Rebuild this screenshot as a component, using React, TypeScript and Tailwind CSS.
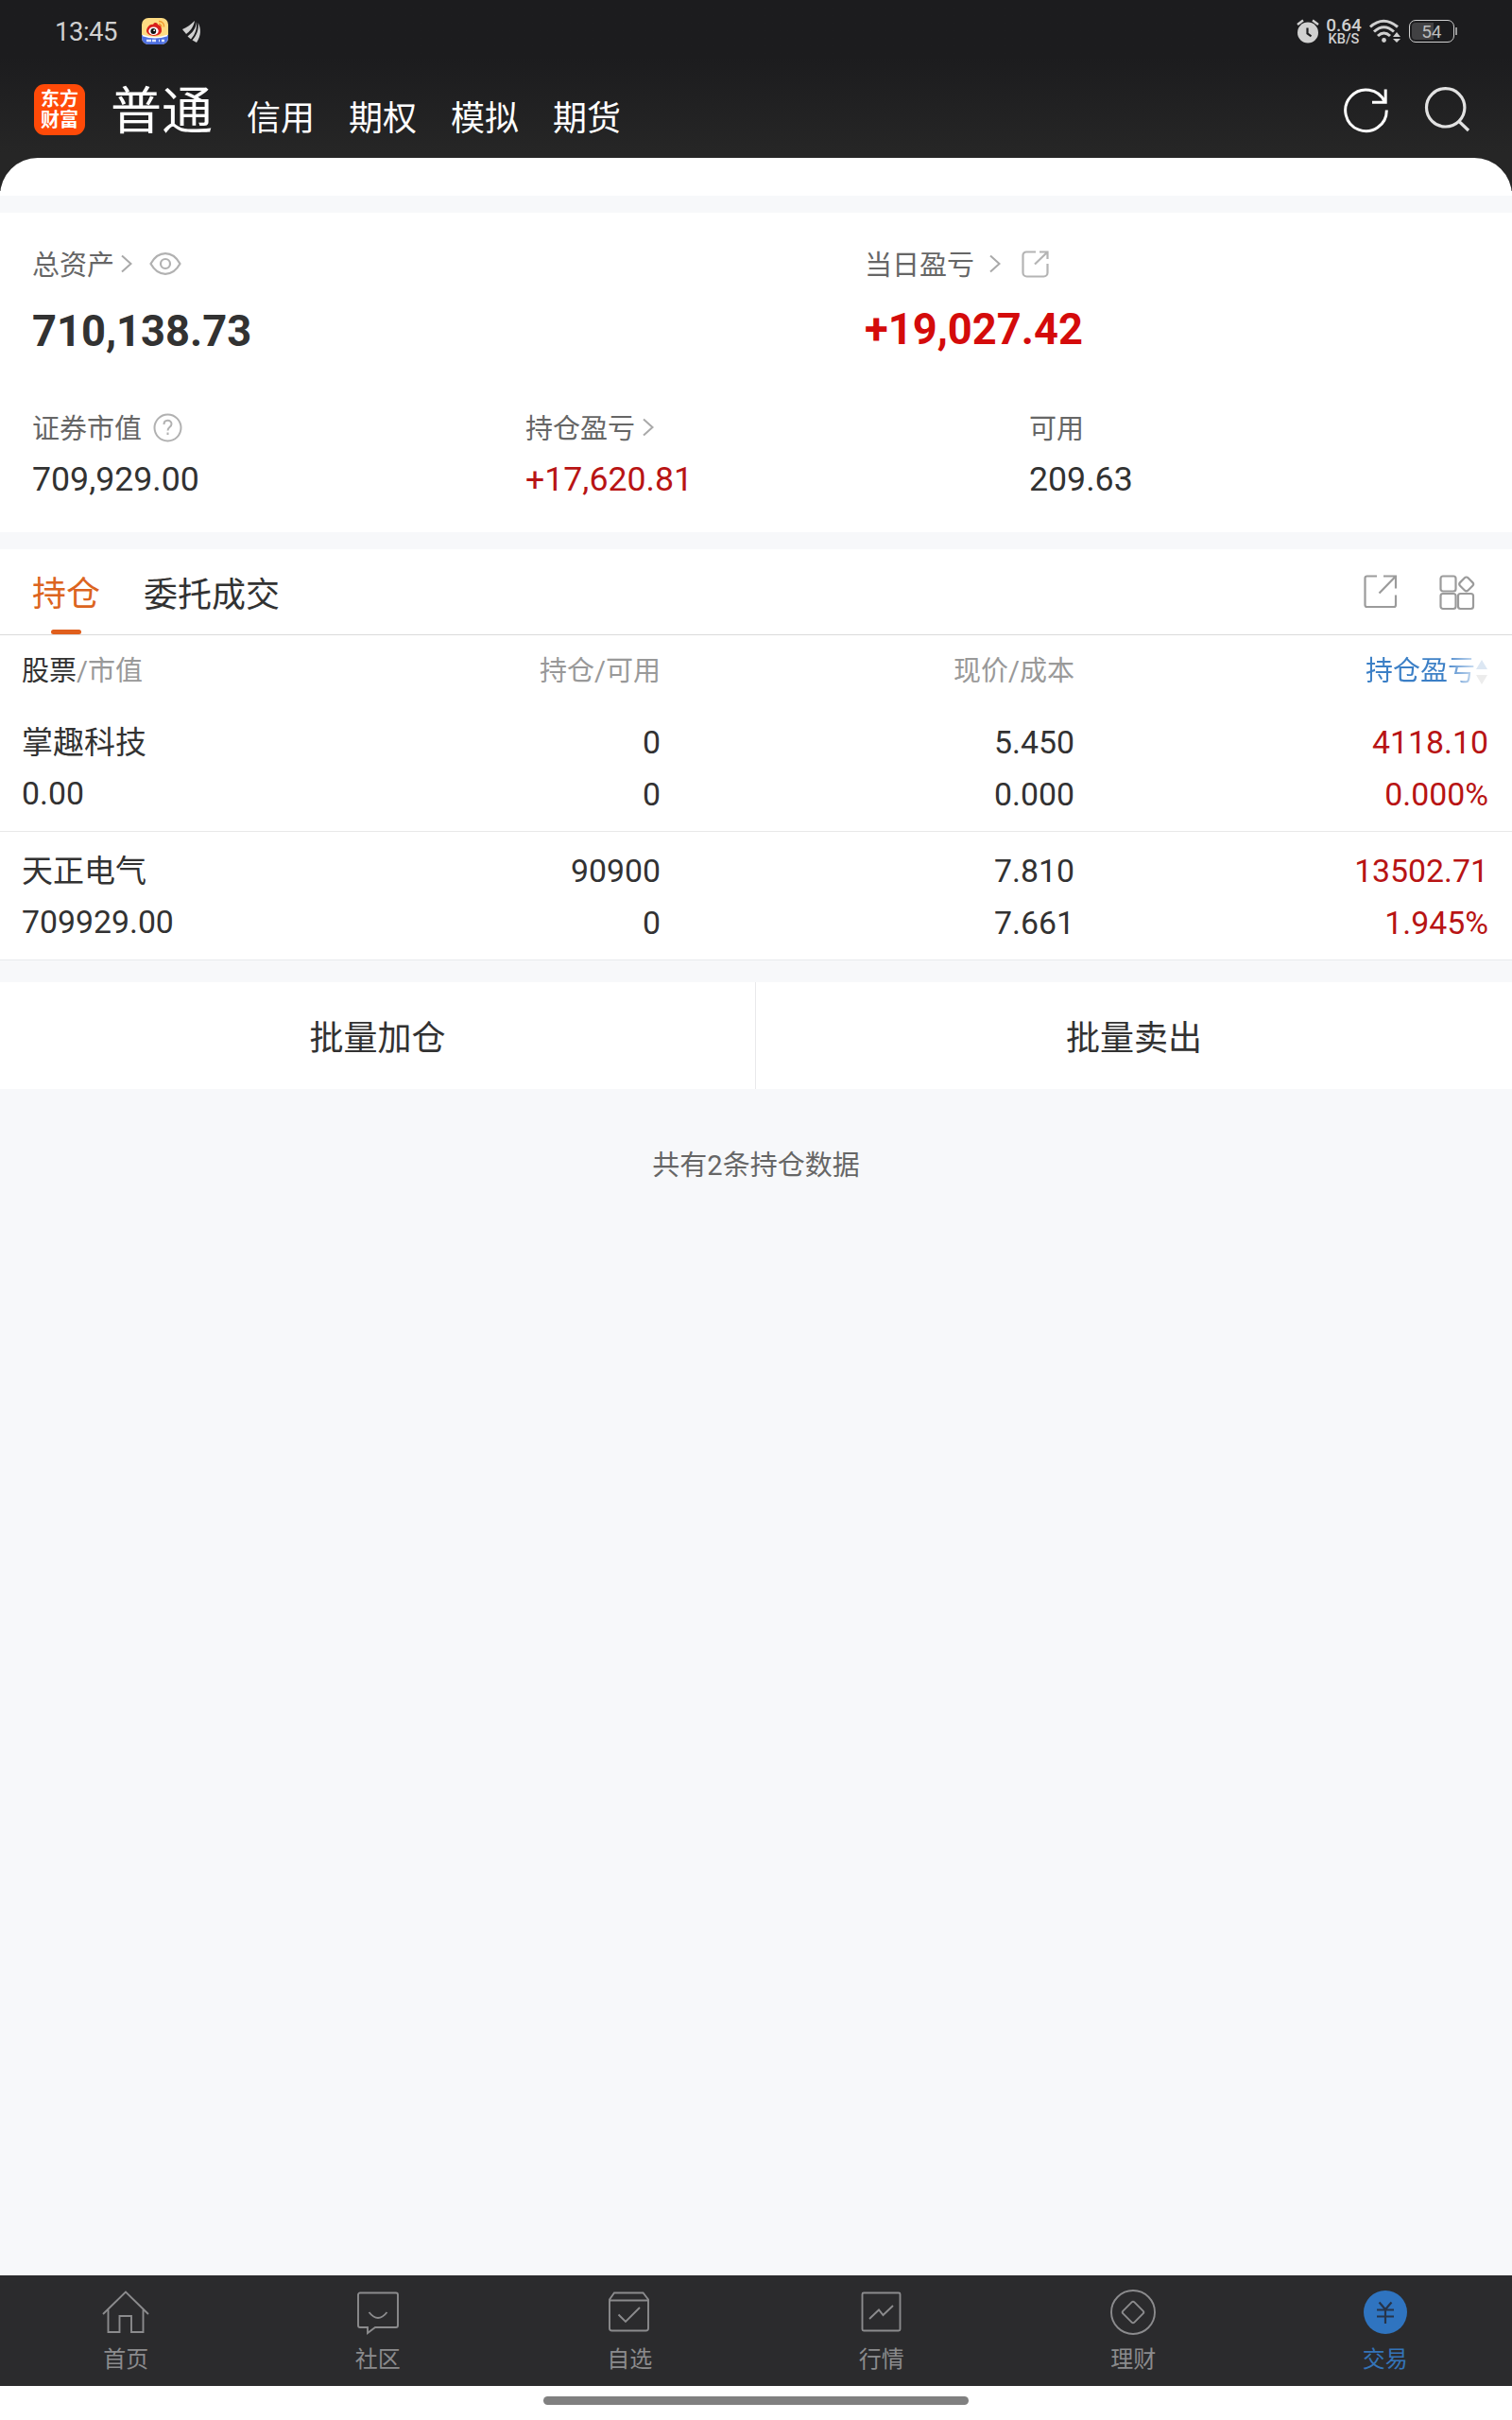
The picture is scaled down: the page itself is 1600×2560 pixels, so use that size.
import React from "react";

const cjk = "font-['Roboto','Noto_Sans_CJK_SC',sans-serif]";

function Chevron({ className = "" }: { className?: string }) {
  return (
    <svg className={className} width="12" height="20" viewBox="0 0 12 20" fill="none" stroke="#a9a9a9" strokeWidth="2">
      <path d="M1 1.500 10.500 10 1 18.500" />
    </svg>
  );
}

function StatusBar() {
  return (
    <div className="flex h-[66px] items-center pl-[58px] pr-[58px] text-[#d0d0d0]">
      <span className="w-[67px] pt-px text-[27.500px] leading-none tracking-[-0.5px]">13:45</span>
      <svg className="ml-[25px]" width="28" height="28" viewBox="0 0 28 28">
        <rect width="28" height="28" rx="7" fill="#fddb83" />
        <path d="M0 18 Q14 23 28 18 V21 a7 7 0 0 1-7 7 H7 a7 7 0 0 1-7-7Z" fill="#4d6fe0" />
        <path d="M1 18.500Q14 23 27 18.500" stroke="#fff" strokeWidth="1.500" fill="none" />
        <path d="M5 14c0-4 4-8 7-7 1-3 5-2 5 0 4 1 4 4 4 7-1 6-14 7-16 0Z" fill="#d8201c" />
        <ellipse cx="12.500" cy="13.800" rx="5.200" ry="4.300" fill="#fff" />
        <circle cx="12.300" cy="14" r="2.900" fill="#111" />
        <circle cx="13.200" cy="13.200" r="0.900" fill="#fff" />
        <path d="M18 3.500c4 0 6 3 5.500 6M18 6.500c2 0 3 1.500 2.800 3" stroke="#f29a2e" strokeWidth="1.400" fill="none" />
        <path d="M5 24h5M11 24h4M18 24h1M21 24h3" stroke="#dfe6ff" strokeWidth="2.400" />
      </svg>
      <svg className="ml-[15px]" width="21" height="23" viewBox="0 0 21 23" fill="#d0d0d0">
        <path d="M0 9C5 7 9 4 13 0 12 7 7 12 4 14 3 12 1 11 0 9Z" />
        <path d="M14.500 1C15 8 10 13 5.500 16.500L9 19.500C14 14 16 7 14.500 1Z" />
        <path d="M16.500 2C18 9 14.500 16 10.500 20.500L15 23C20 16 20 8 16.500 2Z" />
      </svg>
      <div className="ml-auto flex items-center">
        <svg width="24" height="26" viewBox="0 0 24 26" fill="none">
          <circle cx="12" cy="14.500" r="11" fill="#d0d0d0" />
          <path d="M1 6 7 1.500M23 6l-6-4.500" stroke="#d0d0d0" strokeWidth="2.400" />
          <path d="M11.500 9.500v6l4 2.800" stroke="#1d1d1f" strokeWidth="2.200" />
        </svg>
        <div className="ml-[7px] flex w-[38px] flex-col items-center gap-px pt-[2px] font-['Roboto'] font-medium">
          <span className="text-[19px] leading-[15px]">0.64</span>
          <span className="text-[14.500px] leading-[14px]">KB/S</span>
        </div>
        <svg className="ml-2" width="33" height="26" viewBox="0 0 33 26" fill="none" stroke="#d0d0d0" strokeWidth="3">
          <path d="M1 8.500Q15 -4 30 8.500M5 13.500Q15.500 4 26 13.500M9 18Q15.500 12 22 18" />
          <circle cx="15.500" cy="22.500" r="2.400" fill="#d0d0d0" stroke="none" />
          <path d="m29 14 4 5h-8ZM29 25l-4-4h8Z" fill="#d0d0d0" stroke="none" />
        </svg>
        <div className="ml-[9px] flex items-center">
          <div className="flex h-6 w-12 items-center rounded-[7px] border-[1.500px] border-[#d0d0d0] p-[2px]">
            <div className="h-full w-[23px] rounded-l-[4px] bg-[#414143]" />
            <span className="-ml-[23px] w-[43px] text-center font-['Roboto'] text-[19px] leading-none text-[#bdbdbd]">54</span>
          </div>
          <div className="ml-px h-2 w-[2px] bg-[#9a9a9a]" />
        </div>
      </div>
    </div>
  );
}

function Header() {
  return (
    <header className="h-[202px] bg-linear-to-b from-[#1c1c1e] from-30% to-[#262626] to-80% text-white">
      <StatusBar />
      <div className="flex h-[101px] items-start pl-9 pr-[44px]">
        <div className="mt-[23px] flex h-[54px] w-[54px] flex-col items-center justify-center rounded-[11px] bg-[#ff4a08] text-[20px] font-bold leading-[22px]">
          <span>东方</span>
          <span>财富</span>
        </div>
        <span className="ml-[27px] mt-[21px] text-[54px] leading-[64px]">普通</span>
        <nav className="ml-9 mt-[37px] flex gap-9 text-[36px] leading-[46px]">
          <span>信用</span>
          <span>期权</span>
          <span>模拟</span>
          <span>期货</span>
        </nav>
        <svg className="ml-auto mt-[26px]" width="50" height="50" viewBox="0 0 50 50" fill="none" stroke="#fff" strokeWidth="3">
          <path d="M46.300 24.600A21.800 21.800 0 1 1 44.200 15.500M45.200 2.500V16.300H31" />
        </svg>
        <svg className="ml-[35px] mt-[25px]" width="50" height="50" viewBox="0 0 50 50" fill="none" stroke="#e2e2e2" strokeWidth="3.200">
          <circle cx="23.700" cy="22.800" r="20.200" />
          <path d="M37.500 37 48 47" />
        </svg>
      </div>
    </header>
  );
}

const labelRow = "flex items-center text-[29px] text-[#666]";

function Summary() {
  return (
    <section className="h-[338px] bg-white px-[34px] pt-[35px] text-[#323232]">
      <div className="flex h-[172px]">
        <div className="w-[881px]">
          <div className={`h-[38px] ${labelRow}`}>
            <span className="pt-[5px]">总资产</span>
            <Chevron className="ml-[7px]" />
            <svg className="ml-[18px]" width="34" height="24" viewBox="0 0 34 24" fill="none" stroke="#b1b1b1" strokeWidth="2.200">
              <path d="M1.500 12C6 4 11 1.200 17 1.200S28 4 32.500 12C28 20 23 22.800 17 22.800S6 20 1.500 12Z" />
              <circle cx="17" cy="12" r="5" />
            </svg>
          </div>
          <div className="mt-[23px] text-[45.300px] font-bold leading-[60px]">710,138.73</div>
        </div>
        <div>
          <div className={`h-[38px] ${labelRow}`}>
            <span className="pt-[5px]">当日盈亏</span>
            <Chevron className="ml-[16px]" />
            <svg className="ml-[22px]" width="29" height="29" viewBox="0 0 29 29" fill="none" stroke="#b4b4b4" strokeWidth="2.200">
              <path d="M15 1.500H5A3.500 3.500 0 0 0 1.500 5v18.500A4 4 0 0 0 5.500 27.500h18a4 4 0 0 0 4-4V14M19 1.500h8.500V9M27 2 14 14.500" />
            </svg>
          </div>
          <div className="mt-[21px] text-[45.300px] font-bold leading-[60px] text-[#d40b0b]">+19,027.42</div>
        </div>
      </div>
      <div className="flex">
        <div className="w-[522px]">
          <div className={`h-[40px] ${labelRow}`}>
            <span className="pt-[5px]">证券市值</span>
            <svg className="ml-[12px]" width="31" height="31" viewBox="0 0 31 31" fill="none" stroke="#b1b1b1" strokeWidth="2">
              <circle cx="15.500" cy="15.500" r="14" />
              <path d="M11.500 12c0-5.500 8-5.500 8-.5 0 3.500-4 3-4 7M15.500 20.500v2.500" />
            </svg>
          </div>
          <div className="mt-[12px] text-[35.700px] leading-[46px]">709,929.00</div>
        </div>
        <div className="w-[533px]">
          <div className={`h-[40px] ${labelRow}`}>
            <span className="pt-[5px]">持仓盈亏</span>
            <Chevron className="ml-[8px]" />
          </div>
          <div className="mt-[12px] text-[35.700px] leading-[46px] text-[#b81414]">+17,620.81</div>
        </div>
        <div>
          <div className={`h-[40px] ${labelRow}`}>
            <span className="pt-[5px]">可用</span>
          </div>
          <div className="mt-[12px] text-[35.700px] leading-[46px]">209.63</div>
        </div>
      </div>
    </section>
  );
}

const rows = [
  { name: "掌趣科技", value: "0.00", held: "0", free: "0", price: "5.450", cost: "0.000", gain: "4118.10", rate: "0.000%" },
  { name: "天正电气", value: "709929.00", held: "90900", free: "0", price: "7.810", cost: "7.661", gain: "13502.71", rate: "1.945%" },
];

function Holdings() {
  return (
    <section className="mt-[18px] bg-white text-[#323232]">
      <div className="flex h-[91px] items-start border-b border-[#dadada] pl-[34px] pr-[39px] text-[36px] leading-[46px]">
        <div className="flex h-[90px] flex-col items-center pt-[25px] text-[#dc6420]">
          持仓
          <div className="mt-auto h-[5px] w-8 rounded-[3px] bg-[#e05f1d]" />
        </div>
        <span className="ml-[46px] mt-[26px]">委托成交</span>
        <svg className="ml-auto mt-[27px]" width="36" height="36" viewBox="0 0 36 36" fill="none" stroke="#9b9b9b" strokeWidth="2.200">
          <path d="M14 1.500H3.500A2 2 0 0 0 1.500 3.500v28.500A2 2 0 0 0 3.500 34h28.500a2 2 0 0 0 2-2V21.500M21 1.500h13V14.500M33.500 2 16.500 19.500" />
        </svg>
        <svg className="ml-[44px] mt-[27px]" width="38" height="38" viewBox="0 0 38 38" fill="none" stroke="#9b9b9b" strokeWidth="2.200">
          <rect x="1.500" y="1.500" width="16" height="16" rx="2.500" />
          <rect x="1.500" y="20" width="16" height="16" rx="2.500" />
          <rect x="20" y="20" width="16" height="16" rx="2.500" />
          <rect x="22.800" y="4" width="11.800" height="11.800" rx="2.500" transform="rotate(45 28.700 9.900)" />
        </svg>
      </div>
      <div className="grid h-[74px] grid-cols-[351px_325px_438px_438px] items-center pl-[23px] pt-[3px] text-right text-[29px] text-[#999]">
        <span className="text-left"><span className="text-[#323232]">股票</span>/市值</span>
        <span>持仓/可用</span>
        <span>现价/成本</span>
        <span className="flex items-center justify-end">
          <span className="bg-linear-to-r from-[#3b7fc6] from-72% to-[#cfe0f2] bg-clip-text text-transparent">持仓盈亏</span>
          <svg width="14" height="26" viewBox="0 0 14 26">
            <path d="M7 0 13 10H1Z" fill="#dce7f3" />
            <path d="M7 26 1 16h12Z" fill="#ececec" />
          </svg>
        </span>
      </div>
      {rows.map((r, i) => (
        <div
          key={r.name}
          className={`grid grid-cols-[351px_325px_438px_438px] border-b pl-[23px] text-right text-[33.800px] leading-[54px] ${i === 0 ? "h-[134px] border-[#e8e8e8] pt-[13px]" : "h-[136px] border-[#e8eaed] pt-[15px]"}`}
        >
          <div className="text-left">
            <div className="text-[33px]">{r.name}</div>
            <div>{r.value}</div>
          </div>
          <div>
            <div>{r.held}</div>
            <div className="pt-px">{r.free}</div>
          </div>
          <div>
            <div>{r.price}</div>
            <div className="pt-px">{r.cost}</div>
          </div>
          <div className="text-[#b81414]">
            <div>{r.gain}</div>
            <div className="pt-px">{r.rate}</div>
          </div>
        </div>
      ))}
    </section>
  );
}

const stroke = { fill: "none", stroke: "#8b8b8d", strokeWidth: 1.900 };
const tabs = [
  { label: "首页", icon: <path {...stroke} d="M1 26 25 2.500 49 26M6.500 21.500V45H18.500V28h12.500V45H43.500V21.500" /> },
  { label: "社区", icon: <path {...stroke} d="M6 3.500H44a2 2 0 0 1 2 2V38a2 2 0 0 1-2 2H22L14 46V40H6a2 2 0 0 1-2-2V5.500a2 2 0 0 1 2-2ZM15.500 24Q25 36 34.500 24" /> },
  { label: "自选", icon: <path {...stroke} d="M9 3.500H39.500L45 10.500V41a2.500 2.500 0 0 1-2.500 2.500H6.500A2.500 2.500 0 0 1 4 41V10.500ZM4 11.500H45M13.500 26.500 21 34 36 19" /> },
  { label: "行情", icon: <path {...stroke} d="M6 3.500H43a1.500 1.500 0 0 1 1.500 1.500V42a1.500 1.500 0 0 1-1.500 1.500H6A1.500 1.500 0 0 1 4.500 42V5A1.500 1.500 0 0 1 6 3.500ZM12 31 22 21.500 26.500 27 37 17" /> },
  { label: "理财", icon: <g {...stroke}><circle cx="25" cy="24" r="23" /><rect x="16.500" y="15.500" width="17" height="17" rx="2" transform="rotate(45 25 24)" /></g> },
  { label: "交易", icon: <g><circle cx="25" cy="24" r="23" fill="#2f74c0" /><path d="M18.500 13.500 25 21l6.500-7.500M25 21V36M16 21.500H34M16 28.500H34" fill="none" stroke="#273449" strokeWidth="2.200" /></g> },
];

export default function App() {
  return (
    <div className={`flex h-[2560px] w-[1600px] flex-col overflow-hidden bg-[#f7f8fa] ${cjk}`}>
      <Header />
      <div className="-mt-[35px] mb-[18px] h-10 shrink-0 rounded-t-[40px] bg-white" />
      <Summary />
      <Holdings />
      <div className="mt-[23px] grid h-[113px] grid-cols-2 bg-white text-center text-[36px] leading-[121px] text-[#323232]">
        <span className="h-[113px] border-r border-[#e9e9eb]">批量加仓</span>
        <span className="h-[113px]">批量卖出</span>
      </div>
      <p className="mt-[59px] text-center text-[29px] leading-[44px] text-[#666]">共有2条持仓数据</p>
      <nav className="mt-auto grid h-[117px] grid-cols-6 bg-[#2b2b2d] pr-px text-[24px] text-[#8b8b8d]">
        {tabs.map((t, i) => (
          <div key={t.label} className={`flex flex-col items-center pt-[15px] ${i === 5 ? "text-[#3474b8]" : ""}`}>
            <svg width="50" height="48" viewBox="0 0 50 48">{t.icon}</svg>
            <span className="mt-[9px] leading-[34px]">{t.label}</span>
          </div>
        ))}
      </nav>
      <div className="flex h-9 justify-center bg-white pt-[11px]">
        <div className="h-[9px] w-[450px] rounded-full bg-[#808080]" />
      </div>
    </div>
  );
}
